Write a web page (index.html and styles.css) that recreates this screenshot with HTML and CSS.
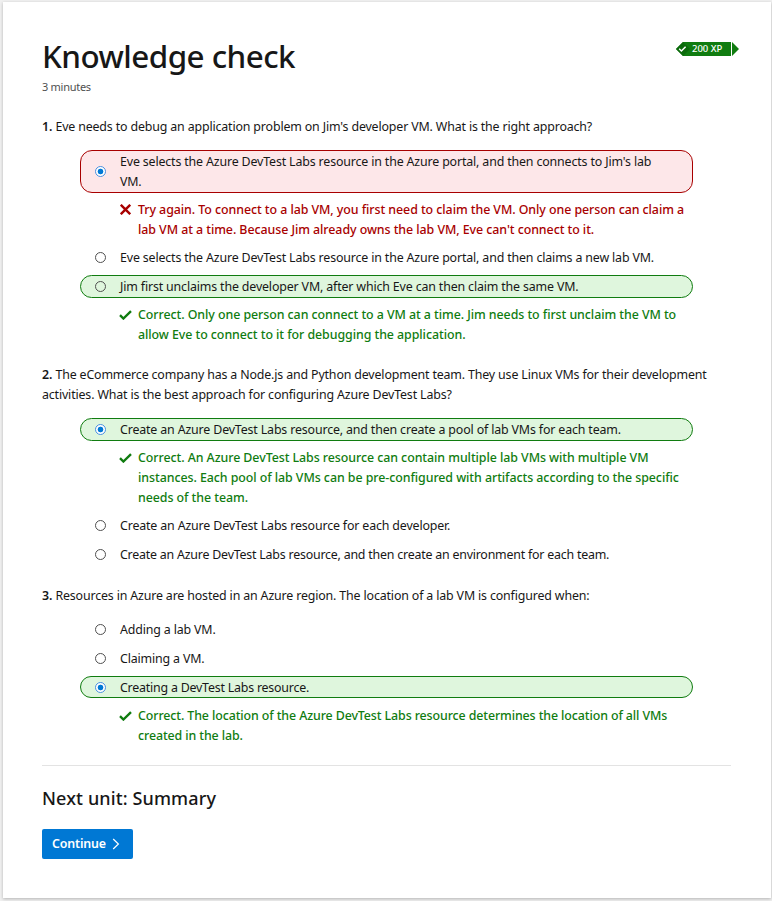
FILE: index.html
```html
<!DOCTYPE html>
<html lang="en">
<head>
<meta charset="utf-8">
<title>Knowledge check</title>
<link rel="stylesheet" href="styles.css">
</head>
<body>
<svg width="0" height="0" class="defs" aria-hidden="true">
  <symbol id="check" viewBox="0 0 13 10"><path d="M1 5.2 4.4 8.5 12 1.2" fill="none" stroke="currentColor" stroke-width="2.4"/></symbol>
  <symbol id="cross" viewBox="0 0 11 11"><path d="M.8 .8 10.2 10.2M10.2 .8 .8 10.2" fill="none" stroke="currentColor" stroke-width="2.4"/></symbol>
</svg>
<main class="card">
  <header class="head">
    <div>
      <h1>Knowledge check</h1>
      <p class="time">3 minutes</p>
    </div>
    <div class="xp">
      <svg class="xp-shape" width="63" height="14" viewBox="0 0 63 14"><path d="M7 0H55V14H7L0 7Z" fill="#107c10"/><path d="M7 0 14 7 7 14 0 7Z" fill="#0b6a0b"/><path d="M56 0 63 7 56 14Z" fill="#107c10"/><path d="M3.2 6.8 5.4 9 9.6 4.8" fill="none" stroke="#fff" stroke-width="1.5"/></svg>
      <span class="xp-text">200 XP</span>
    </div>
  </header>

  <section class="question">
    <p class="prompt"><b>1.</b> <span>Eve needs to debug an application problem on Jim's developer VM. What is the right approach?</span></p>
    <div class="choices">
      <label class="choice wrong"><i class="radio on"></i><span>Eve selects the Azure DevTest Labs resource in the Azure portal, and then connects to Jim's lab<br>VM.</span></label>
      <div class="feedback bad"><svg class="cross"><use href="#cross"/></svg><p>Try again. To connect to a lab VM, you first need to claim the VM. Only one person can claim a<br>lab VM at a time. Because Jim already owns the lab VM, Eve can't connect to it.</p></div>
      <label class="choice"><i class="radio"></i><span>Eve selects the Azure DevTest Labs resource in the Azure portal, and then claims a new lab VM.</span></label>
      <label class="choice right"><i class="radio"></i><span>Jim first unclaims the developer VM, after which Eve can then claim the same VM.</span></label>
      <div class="feedback good"><svg class="check"><use href="#check"/></svg><p>Correct. Only one person can connect to a VM at a time. Jim needs to first unclaim the VM to<br>allow Eve to connect to it for debugging the application.</p></div>
    </div>
  </section>

  <section class="question">
    <p class="prompt"><b>2.</b> <span>The eCommerce company has a Node.js and Python development team. They use Linux VMs for their development<br>activities. What is the best approach for configuring Azure DevTest Labs?</span></p>
    <div class="choices">
      <label class="choice right"><i class="radio on"></i><span>Create an Azure DevTest Labs resource, and then create a pool of lab VMs for each team.</span></label>
      <div class="feedback good"><svg class="check"><use href="#check"/></svg><p>Correct. An Azure DevTest Labs resource can contain multiple lab VMs with multiple VM<br>instances. Each pool of lab VMs can be pre-configured with artifacts according to the specific<br>needs of the team.</p></div>
      <label class="choice"><i class="radio"></i><span>Create an Azure DevTest Labs resource for each developer.</span></label>
      <label class="choice"><i class="radio"></i><span class="tight">Create an Azure DevTest Labs resource, and then create an environment for each team.</span></label>
    </div>
  </section>

  <section class="question">
    <p class="prompt"><b>3.</b> <span>Resources in Azure are hosted in an Azure region. The location of a lab VM is configured when:</span></p>
    <div class="choices">
      <label class="choice"><i class="radio"></i><span>Adding a lab VM.</span></label>
      <label class="choice"><i class="radio"></i><span>Claiming a VM.</span></label>
      <label class="choice right"><i class="radio on"></i><span class="tight">Creating a DevTest Labs resource.</span></label>
      <div class="feedback good"><svg class="check"><use href="#check"/></svg><p class="snug">Correct. The location of the Azure DevTest Labs resource determines the location of all VMs<br>created in the lab.</p></div>
    </div>
  </section>

  <footer class="next">
    <h2>Next unit: Summary</h2>
    <button class="continue" type="button"><span>Continue</span><svg width="8" height="12" viewBox="0 0 8 12"><path d="M1.2 1 6.4 6 1.2 11" fill="none" stroke="#fff" stroke-width="1.2"/></svg></button>
  </footer>
</main>
</body>
</html>
```
FILE: styles.css
```css
* { box-sizing: border-box; }
body { margin: 0; padding: 2px 1px 0 3px; height: 901px; overflow: hidden; background: #f0f0f0; color: #171717; font-family: "Noto Sans", "Open Sans", sans-serif; font-size: 12.4px; font-weight: 390; letter-spacing: -.15px; }
h1, h2, p { margin: 0; white-space: nowrap; }
.defs { position: absolute; }
.card { height: 896px; background: #fff; padding: 31px 40px 0 39px; box-shadow: 0 1px 3px rgba(0, 0, 0, .25); }
.head { display: flex; justify-content: space-between; height: 81.6px; }
h1 { font-size: 31.4px; font-weight: 470; line-height: 46px; letter-spacing: -.53px; }
.time { font-size: 11px; line-height: 16px; color: #505050; letter-spacing: -.28px; }
.xp { position: relative; width: 63px; height: 14px; margin: 9px -8px 0 0; }
.xp-shape { display: block; }
.xp-text { position: absolute; left: 16px; top: 0; font: 500 9.5px/14px "Noto Sans", sans-serif; letter-spacing: 0; color: #fff; white-space: nowrap; }
.question { margin-bottom: 19.7px; }
.question:last-of-type { margin-bottom: 19.2px; }
.prompt { line-height: 20.6px; margin: 2.4px 0 12.2px; }
.prompt b { font-weight: 600; letter-spacing: -.1px; }
.choices { display: flex; flex-direction: column; gap: 6.3px; margin: 0 0 0 38px; width: 613px; }
.choice { display: flex; align-items: center; min-height: 22.5px; line-height: 20.3px; border: 1px solid transparent; border-radius: 12px; padding-left: 14px; white-space: nowrap; }
.choice span { position: relative; top: .8px; }
.choice .tight { letter-spacing: -.21px; }
.wrong { min-height: 43px; background: #fde7e9; border-color: #a80000; }
.right { background: #dff6dd; border-color: #107c10; }
.radio { flex: none; width: 11px; height: 11px; margin-right: 14px; border: 1px solid #505050; border-radius: 50%; background: #fff; }
.right .radio { background: transparent; }
.radio.on { border-color: #4a90e0; background: radial-gradient(circle, #0078d4 0 2.5px, #fff 3.2px); }
.feedback { display: flex; align-items: flex-start; margin: .8px 0 -.6px 39px; font-weight: 550; line-height: 20.4px; letter-spacing: -.06px; }
.feedback p { margin-left: 6px; }
.feedback .snug { letter-spacing: -.1px; }
.feedback svg { flex: none; width: 13px; height: 10px; margin-top: 5px; }
.feedback .cross { width: 11px; height: 11px; margin: 4px 1px 0; }
.bad { color: #a80000; }
.good { color: #107c10; }
.next { border-top: 1px solid #e3e3e3; height: 100px; }
h2 { font-size: 18px; font-weight: 470; line-height: 26px; margin: 19px 0 18px; letter-spacing: .12px; }
.continue { display: flex; align-items: center; gap: 6px; width: 91px; height: 30px; padding: 0 0 0 10px; border: 0; border-radius: 2px; background: #0078d4; color: #fff; font: 600 12.4px/20px "Noto Sans", sans-serif; letter-spacing: -.15px; }
.continue span { position: relative; top: .5px; }
```
